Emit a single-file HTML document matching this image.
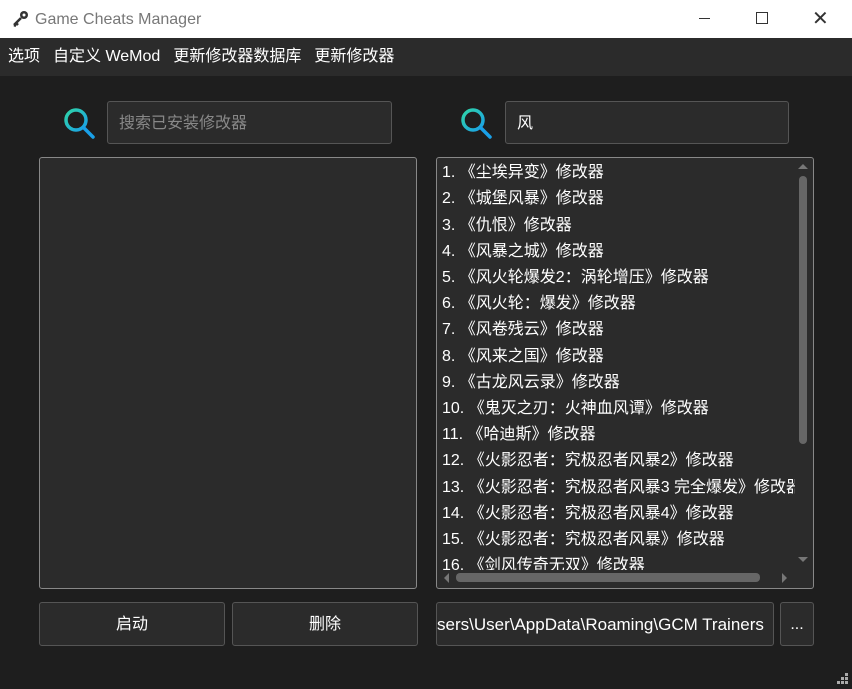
<!DOCTYPE html><html><head><meta charset="utf-8"><style>
*{margin:0;padding:0;box-sizing:border-box}
body{width:852px;height:689px;overflow:hidden;background:#1e1e1e;font-family:"Liberation Sans","Noto Sans CJK SC",sans-serif;position:relative;color:#fff}
.a{position:absolute}
.title{left:0;top:0;width:852px;height:38px;background:#fff;color:#777;font-size:16px}
.menu{left:0;top:38px;width:852px;height:38px;background:#2b2b2b;font-size:16px;line-height:38px;color:#fff}
.box{background:#2b2b2b;border:1px solid #555;border-radius:3px}
.list{background:#2b2b2b;border:1px solid #888;border-radius:3px;overflow:hidden}
.item{position:absolute;left:5px;font-size:16px;white-space:nowrap;height:26px;line-height:26px}
.btn{background:#2b2b2b;border:1px solid #555;border-radius:3px;font-size:16px;text-align:center;line-height:44px}
</style></head><body>
<div class="a title">
<svg class="a" style="left:11px;top:10px" width="18" height="18" viewBox="0 0 18 18"><circle cx="13" cy="5" r="4" fill="#333"/><path d="M10 8L3 15M5 13l2 2M3 15l2 1" stroke="#333" stroke-width="2.5"/><circle cx="13" cy="5" r="1.5" fill="#fff"/></svg>
<div class="a" style="left:35px;top:11px">Game Cheats Manager</div>
<div class="a" style="left:699px;top:18px;width:11px;height:1px;background:#333"></div>
<div class="a" style="left:756px;top:12px;width:12px;height:12px;border:1px solid #333"></div>
<div class="a" style="left:812px;top:11px;font-size:20px;color:#333;line-height:16px">✕</div>
</div>
<div class="a menu"><span style="margin-left:8px">选项</span><span style="margin-left:13px">自定义 WeMod</span><span style="margin-left:13px">更新修改器数据库</span><span style="margin-left:13px">更新修改器</span></div>
<svg class="a" style="left:63px;top:107px" width="34" height="32" viewBox="0 0 34 32"><defs><linearGradient id="g" x1="0" y1="0" x2="1" y2="1"><stop offset="0" stop-color="#2fd4a8"/><stop offset="1" stop-color="#1aa0e8"/></linearGradient></defs><circle cx="13" cy="13" r="10" fill="none" stroke="url(#g)" stroke-width="3.5"/><path d="M21 21l9 9" stroke="#1aa0e8" stroke-width="3.5" stroke-linecap="round"/></svg>
<svg class="a" style="left:460px;top:107px" width="34" height="32" viewBox="0 0 34 32"><circle cx="13" cy="13" r="10" fill="none" stroke="url(#g)" stroke-width="3.5"/><path d="M21 21l9 9" stroke="#1aa0e8" stroke-width="3.5" stroke-linecap="round"/></svg>
<div class="a box" style="left:107px;top:101px;width:285px;height:43px;color:#888;font-size:16px;line-height:43px;padding-left:11px">搜索已安装修改器</div>
<div class="a box" style="left:505px;top:101px;width:284px;height:43px;font-size:16px;line-height:43px;padding-left:11px">风</div>
<div class="a list" style="left:39px;top:157px;width:378px;height:432px"></div>
<div class="a list" style="left:436px;top:157px;width:378px;height:432px">
<div class="item" style="top:2px">1. 《尘埃异变》修改器</div>
<div class="item" style="top:28px">2. 《城堡风暴》修改器</div>
<div class="item" style="top:55px">3. 《仇恨》修改器</div>
<div class="item" style="top:81px">4. 《风暴之城》修改器</div>
<div class="item" style="top:107px">5. 《风火轮爆发2：涡轮增压》修改器</div>
<div class="item" style="top:133px">6. 《风火轮：爆发》修改器</div>
<div class="item" style="top:159px">7. 《风卷残云》修改器</div>
<div class="item" style="top:186px">8. 《风来之国》修改器</div>
<div class="item" style="top:212px">9. 《古龙风云录》修改器</div>
<div class="item" style="top:238px">10. 《鬼灭之刃：火神血风谭》修改器</div>
<div class="item" style="top:264px">11. 《哈迪斯》修改器</div>
<div class="item" style="top:290px">12. 《火影忍者：究极忍者风暴2》修改器</div>
<div class="item" style="top:317px">13. 《火影忍者：究极忍者风暴3 完全爆发》修改器</div>
<div class="item" style="top:343px">14. 《火影忍者：究极忍者风暴4》修改器</div>
<div class="item" style="top:369px">15. 《火影忍者：究极忍者风暴》修改器</div>
<div class="item" style="top:395px">16. 《剑风传奇无双》修改器</div>
<div class="a" style="left:358px;top:2px;width:16px;height:410px;background:#2b2b2b"></div>
<div class="a" style="left:362px;top:18px;width:8px;height:268px;background:#666;border-radius:4px"></div>
<div class="a" style="left:361px;top:6px;width:0;height:0;border:5px solid transparent;border-bottom-color:#777;border-top:0"></div>
<div class="a" style="left:361px;top:399px;width:0;height:0;border:5px solid transparent;border-top-color:#777;border-bottom:0"></div>
<div class="a" style="left:2px;top:412px;width:356px;height:16px;background:#2b2b2b"></div>
<div class="a" style="left:19px;top:415px;width:304px;height:9px;background:#666;border-radius:4px"></div>
<div class="a" style="left:7px;top:415px;border:5px solid transparent;border-right-color:#777;border-left:0"></div>
<div class="a" style="left:345px;top:415px;border:5px solid transparent;border-left-color:#777;border-right:0"></div>
</div>
<div class="a btn" style="left:39px;top:602px;width:186px;height:44px">启动</div>
<div class="a btn" style="left:232px;top:602px;width:186px;height:44px">删除</div>
<div class="a btn" style="left:436px;top:602px;width:338px;height:44px;text-align:right;padding-right:12px;overflow:hidden;white-space:nowrap;font-size:17px">sers\User\AppData\Roaming\GCM Trainers</div>
<div class="a btn" style="left:780px;top:602px;width:34px;height:44px">...</div>
<svg class="a" style="left:836px;top:673px" width="14" height="14"><g fill="#aaa"><rect x="9" y="0" width="3" height="3"/><rect x="5" y="4" width="3" height="3"/><rect x="9" y="4" width="3" height="3"/><rect x="1" y="8" width="3" height="3"/><rect x="5" y="8" width="3" height="3"/><rect x="9" y="8" width="3" height="3"/></g></svg>
</body></html>
